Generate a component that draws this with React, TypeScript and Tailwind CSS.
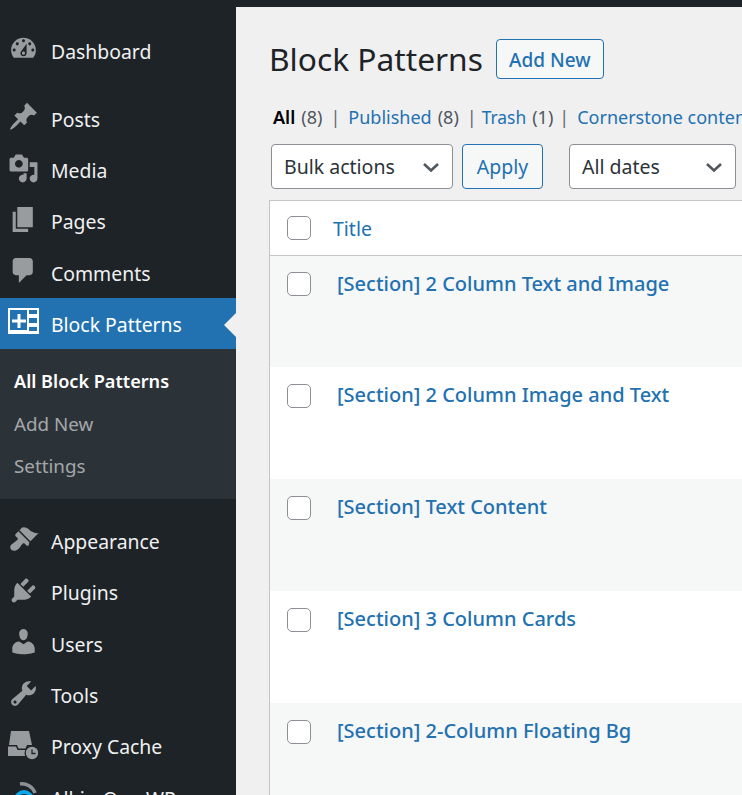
const DASH = {
  dashboard:
    "M3.76 16h12.48c1.1-1.37 1.76-3.11 1.76-5 0-4.42-3.58-8-8-8s-8 3.58-8 8c0 1.89.66 3.63 1.76 5zM10 4c.55 0 1 .45 1 1s-.45 1-1 1-1-.45-1-1 .45-1 1-1zM6 6c.55 0 1 .45 1 1s-.45 1-1 1-1-.45-1-1 .45-1 1-1zm8 0c.55 0 1 .45 1 1s-.45 1-1 1-1-.45-1-1 .45-1 1-1zm-5.37 5.55L12 7v6c0 1.1-.9 2-2 2s-2-.9-2-2c0-.57.24-1.08.63-1.45zM4 10c.55 0 1 .45 1 1s-.45 1-1 1-1-.45-1-1 .45-1 1-1zm12 0c.55 0 1 .45 1 1s-.45 1-1 1-1-.45-1-1 .45-1 1-1zm-5 3c0-.55-.45-1-1-1s-1 .45-1 1 .45 1 1 1 1-.45 1-1z",
  posts:
    "M10.44 3.02l1.82-1.82 6.36 6.35-1.83 1.82c-1.05-.68-2.48-.57-3.41.36l-.75.75c-.92.93-1.04 2.35-.35 3.41l-1.83 1.82-2.41-2.41-2.8 2.79c-.42.42-3.38 2.71-3.8 2.29s1.86-3.39 2.28-3.81l2.79-2.79L4.1 9.36l1.83-1.82c1.05.69 2.48.57 3.4-.36l.75-.75c.93-.92 1.05-2.35.36-3.41z",
  media:
    "M13 11V4c0-.55-.45-1-1-1h-1.67L9 1H5L3.67 3H2c-.55 0-1 .45-1 1v7c0 .55.45 1 1 1h10c.55 0 1-.45 1-1zM7 4.5c1.38 0 2.5 1.12 2.5 2.5S8.38 9.5 7 9.5 4.5 8.38 4.5 7 5.62 4.5 7 4.5zM14 6h5v10.5c0 1.38-1.12 2.5-2.5 2.5S14 17.88 14 16.5s1.12-2.5 2.5-2.5c.17 0 .34.02.5.05V9h-3V6zm-4 8.05V13h2v3.5c0 1.38-1.12 2.5-2.5 2.5S7 17.88 7 16.5 8.12 14 9.5 14c.17 0 .34.02.5.05z",
  pages: "M6 15V2h10v13H6zm-1 1h8v2H3V5h2v11z",
  comments: "M5 2h9c1.1 0 2 .9 2 2v7c0 1.1-.9 2-2 2h-2l-5 5v-5H5c-1.1 0-2-.9-2-2V4c0-1.1.9-2 2-2z",
  appearance:
    "M14.48 11.06L7.41 3.99l1.5-1.5c.5-.56 2.3-.47 3.51.32 1.21.8 1.43 1.28 2.91 2.1 1.18.64 2.45 1.26 4.45.85zm-.71.71L6.7 4.7 4.93 6.47c-.39.39-.39 1.02 0 1.41l1.06 1.06c.39.39.39 1.03 0 1.42-.6.6-1.43 1.11-2.21 1.69-.35.26-.7.53-1.01.84C1.43 13.23.91 15.39 2.15 16.6c1.24 1.23 3.4.71 4.74-.63.31-.31.58-.66.84-1.01.58-.78 1.09-1.61 1.69-2.21.39-.39 1.02-.39 1.41 0l1.06 1.06c.39.39 1.02.39 1.41 0z",
  plugins:
    "M13.11 4.36L9.87 7.6 8 5.73l3.24-3.24c.35-.34 1.05-.2 1.56.32.52.51.66 1.21.31 1.55zm-8 1.77l.91-1.12 9.01 9.01-1.19.84c-.71.71-2.63 1.16-3.82 1.16H6.14L4.9 17.26c-.59.59-1.54.59-2.12 0-.59-.58-.59-1.53 0-2.12l1.24-1.24v-3.88c0-1.13.4-3.19 1.09-3.89zm7.26 3.97l3.24-3.24c.34-.35 1.04-.21 1.55.31.52.51.66 1.21.31 1.55l-3.24 3.25z",
  users:
    "M10 9.25c-2.27 0-2.73-3.44-2.73-3.44C7 4.02 7.82 2 9.97 2c2.16 0 2.98 2.02 2.71 3.81 0 0-.41 3.44-2.68 3.44zm0 2.57L12.72 10c2.39 0 4.52 2.33 4.52 4.53v2.49s-3.65 1.13-7.24 1.13c-3.65 0-7.24-1.13-7.24-1.13v-2.49c0-2.25 1.94-4.48 4.47-4.48z",
  tools:
    "M16.68 9.77c-1.34 1.34-3.3 1.67-4.95.99l-5.41 6.52c-.99.99-2.59.99-3.58 0s-.99-2.59 0-3.57l6.52-5.42c-.68-1.65-.35-3.61.99-4.95 1.28-1.28 3.12-1.62 4.72-1.06l-2.89 2.89 2.82 2.82 2.86-2.87c.53 1.58.18 3.39-1.08 4.65zM3.81 16.21c.4.39 1.04.39 1.43 0 .4-.4.4-1.04 0-1.43-.39-.4-1.03-.4-1.43 0-.39.39-.39 1.03 0 1.43z",
};

function DashIcon({ d }: { d: string }) {
  return (
    <svg viewBox="0 0 20 20" className="w-[31px] h-[31px] fill-[#a7aaad] opacity-90">
      <path d={d} />
    </svg>
  );
}

function PatternIcon() {
  return (
    <svg viewBox="0 0 31 26" className="w-[31px] h-[26px]">
      <path
        fill="#fff"
        fillRule="evenodd"
        d="M0 0h31v26H0zM2 2v20h17V2zM21 2v4h8V2zM21 10v5h8v-5zM21 19v4h8v-4z"
      />
      <path fill="#fff" d="M9.5 6h3v5.5H18v3h-5.5V20h-3v-5.5H4v-3h5.5z" />
    </svg>
  );
}

function CacheIcon() {
  return (
    <svg viewBox="0 0 30 29" className="w-[30px] h-[29px] mt-[3px] opacity-90">
      <path fill="#a7aaad" d="M3 0h18l3 14h-5l-1.5 3.5h-7L9 14H1z" />
      <path fill="#a7aaad" d="M0 15.5h8l1.5 3.5h10l1-3.5H25V25H0z" />
      <circle cx="24" cy="22" r="7.5" fill="#1d2327" />
      <circle cx="24" cy="22" r="6.2" fill="#a7aaad" />
      <path stroke="#1d2327" strokeWidth="1.3" fill="none" d="M24 18.5v4h3.5" />
    </svg>
  );
}

function AioIcon() {
  return (
    <svg viewBox="0 0 30 30" className="w-[30px] h-[30px]">
      <circle cx="16" cy="19" r="8" fill="none" stroke="#0ea5e9" strokeWidth="4" />
      <path d="M12 3a14 14 0 0 1 15 9" fill="none" stroke="#8c8f94" strokeWidth="3.5" />
    </svg>
  );
}

function MenuItem({ icon, label }: { icon: React.ReactNode; label: string }) {
  return (
    <div className="flex h-[51.3px] shrink-0 items-center text-[#f0f0f1]">
      <div className="w-[51px] pl-[8px] -mt-[4px] shrink-0">{icon}</div>
      <span className="mt-[1px]">{label}</span>
    </div>
  );
}

function Sidebar() {
  return (
    <aside className="w-[236px] shrink-0 bg-[#1d2327] text-[19.4px] flex flex-col overflow-hidden">
      <div className="pt-[18px] pb-[17px]">
        <MenuItem icon={<DashIcon d={DASH.dashboard} />} label="Dashboard" />
      </div>
      <MenuItem icon={<DashIcon d={DASH.posts} />} label="Posts" />
      <MenuItem icon={<DashIcon d={DASH.media} />} label="Media" />
      <MenuItem icon={<DashIcon d={DASH.pages} />} label="Pages" />
      <MenuItem icon={<DashIcon d={DASH.comments} />} label="Comments" />
      <div className="relative flex h-[51px] shrink-0 items-center bg-[#2271b1] text-white">
        <div className="w-[51px] pl-[8px] -mt-[5px] shrink-0">
          <PatternIcon />
        </div>
        <span className="mt-[2px]">Block Patterns</span>
        <div className="absolute right-0 top-[15px] border-y-[12px] border-r-[12px] border-y-transparent border-r-[#f0f0f1]" />
      </div>
      <div className="bg-[#2c3338] h-[150px] shrink-0 pt-[12px] pl-[14px] text-[18.8px] text-[#c3c4c7] mb-[16px]">
        <div className="h-[42px] flex items-center font-semibold text-[18.1px] text-white -mt-[1px]">
          All Block Patterns
        </div>
        <div className="h-[43px] flex items-center opacity-80">Add New</div>
        <div className="h-[42px] flex items-center opacity-80">Settings</div>
      </div>
      <MenuItem icon={<DashIcon d={DASH.appearance} />} label="Appearance" />
      <MenuItem icon={<DashIcon d={DASH.plugins} />} label="Plugins" />
      <MenuItem icon={<DashIcon d={DASH.users} />} label="Users" />
      <MenuItem icon={<DashIcon d={DASH.tools} />} label="Tools" />
      <MenuItem icon={<CacheIcon />} label="Proxy Cache" />
      <MenuItem icon={<AioIcon />} label="All-in-One WP" />
    </aside>
  );
}

function Select({ label, width }: { label: string; width: string }) {
  return (
    <div
      className={`${width} h-[45px] shrink-0 flex items-center justify-between pl-[12px] pr-[11px] bg-white border border-[#8c8f94] rounded-[4px] text-[#2c3338]`}
    >
      <span>{label}</span>
      <svg viewBox="0 0 20 20" className="w-[20px] h-[20px] fill-none stroke-[#50575e] stroke-[2.6]">
        <path d="M3 7l7 6.5L17 7" />
      </svg>
    </div>
  );
}

function Checkbox() {
  return <div className="w-[24px] h-[24px] shrink-0 bg-white border border-[#8c8f94] rounded-[5px]" />;
}

function Row({ title, alt, first }: { title: string; alt?: boolean; first?: boolean }) {
  return (
    <div
      className={`flex shrink-0 items-start pl-[17px] ${first ? "h-[111px] pt-[16px]" : "h-[112px] pt-[17px]"} ${
        alt ? "bg-[#f6f7f7]" : "bg-white"
      }`}
    >
      <Checkbox />
      <a
        className={`ml-[26px] font-medium text-[20px] text-[#2271b1] whitespace-nowrap ${
          first ? "-mt-[3px]" : "-mt-[4px]"
        }`}
      >
        {title}
      </a>
    </div>
  );
}

function Sep({ className }: { className: string }) {
  return <span className={`text-[#646970] ${className}`}>|</span>;
}

function Count({ n }: { n: number }) {
  return <span className="text-[#50575e] ml-[6px]">({n})</span>;
}

export default function App() {
  return (
    <div className="h-[795px] w-[742px] overflow-hidden flex flex-col bg-[#f0f0f1] text-[19.5px] font-['Noto_Sans',sans-serif]">
      <div className="h-[7px] shrink-0 bg-[#1d2327]" />
      <div className="flex flex-1 min-h-0">
        <Sidebar />
        <main className="flex-1 min-w-0 overflow-hidden pl-[33px] pt-[32px]">
          <div className="flex items-center h-[40px]">
            <h1 className="text-[31.7px] text-[#1d2327]">Block Patterns</h1>
            <button className="ml-[13px] h-[40px] w-[108px] pt-[2px] border border-[#2271b1] rounded-[4px] bg-[#f6f7f7] text-[19px] text-[#2271b1] font-medium">
              Add New
            </button>
          </div>
          <div className="mt-[26px] flex items-center whitespace-nowrap h-[24px] pl-[4px] text-[18px] text-[#2271b1]">
            <span className="font-semibold text-black">All</span>
            <Count n={8} />
            <Sep className="mx-[8px]" />
            <span>Published</span>
            <Count n={8} />
            <Sep className="ml-[8px] mr-[5px]" />
            <span className="text-[17.4px]">Trash</span>
            <Count n={1} />
            <Sep className="ml-[6px] mr-[8px]" />
            <span>Cornerstone content</span>
          </div>
          <div className="mt-[15px] ml-[2px] flex items-center">
            <Select label="Bulk actions" width="w-[182px]" />
            <button className="ml-[9px] w-[81px] h-[45px] shrink-0 border border-[#2271b1] rounded-[4px] bg-[#f6f7f7] text-[#2271b1]">
              Apply
            </button>
            <div className="ml-[26px]">
              <Select label="All dates" width="w-[167px]" />
            </div>
          </div>
          <div className="mt-[11px] w-[600px] border-l border-t border-[#c3c4c7] bg-white">
            <div className="flex h-[55px] items-center border-b border-[#c3c4c7] pl-[17px]">
              <Checkbox />
              <span className="ml-[22px] mt-[2px] text-[#2271b1]">Title</span>
            </div>
            <Row title="[Section] 2 Column Text and Image" alt first />
            <Row title="[Section] 2 Column Image and Text" />
            <Row title="[Section] Text Content" alt />
            <Row title="[Section] 3 Column Cards" />
            <Row title="[Section] 2-Column Floating Bg" alt />
          </div>
        </main>
      </div>
    </div>
  );
}
